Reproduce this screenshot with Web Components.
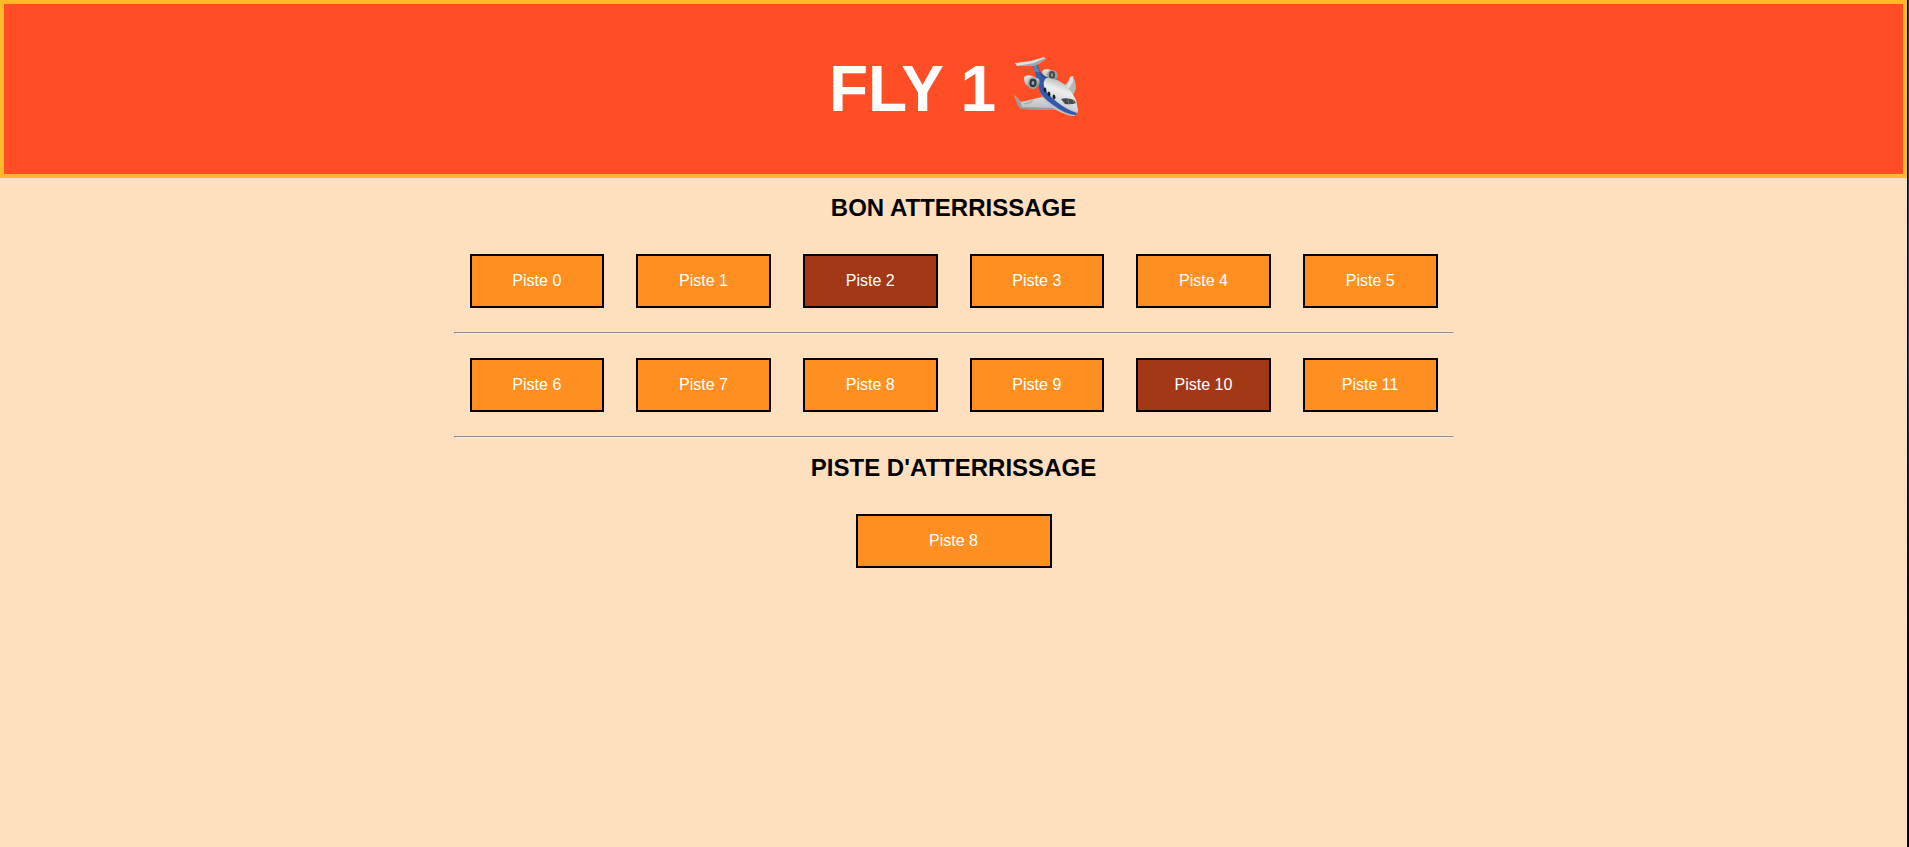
<!DOCTYPE html>
<html lang="fr">
<head>
<meta charset="utf-8">
<meta name="viewport" content="width=device-width, initial-scale=1">
<title>FLY 1</title>
<style>
  html { background: linear-gradient(#1c3a55, #2a4878 40%, #0a1c38 65%, #000 80%); }
  body {
    margin: 0 2px 0 0;
    min-height: 100vh;
    background: #ffe0be;
    box-shadow: 1px 0 #050a10;
    font: 16px/18px "Liberation Sans", Arial, sans-serif;
    color: #000;
  }
</style>
</head>
<body>
<fly-app></fly-app>

<script>
class PlaneIcon extends HTMLElement {
  constructor() {
    super();
    this.attachShadow({ mode: "open" }).innerHTML = `
      <style>
        :host { display: block; width: 64px; height: 64px; }
        svg { display: block; width: 100%; height: 100%; }
      </style>
      <svg viewBox="0 0 64 64" role="img" aria-label="Avion">
        <defs>
          <linearGradient id="body" x1="0.65" y1="0.1" x2="0.35" y2="0.9">
            <stop offset="0" stop-color="#b9bcbc"/><stop offset="0.3" stop-color="#eceeed"/>
            <stop offset="0.7" stop-color="#d3d6d7"/><stop offset="1" stop-color="#9aa1a8"/>
          </linearGradient>
          <linearGradient id="wing" x1="0" y1="0" x2="0" y2="1">
            <stop offset="0" stop-color="#dddfde"/><stop offset="1" stop-color="#b8bbbb"/>
          </linearGradient>
          <linearGradient id="engine" x1="0" y1="0" x2="0.3" y2="1">
            <stop offset="0" stop-color="#ecedeb"/><stop offset="0.6" stop-color="#bdc0be"/><stop offset="1" stop-color="#73797a"/>
          </linearGradient>
        </defs>
        <path d="M48 29Q54 27 56 20L59 19Q62 26 62 31L60 37 54 36Z" fill="#b5b8b7"/>
        <path d="M56 20 59 19 59 25 55 31 51 30Q55 27 56 20Z" fill="#dfe1df"/>
        <path d="M0 38 4 42 7 45 28 40 42 50 41 53 7 52 4 48Z" fill="url(#wing)"/>
        <path d="M0 38 4 42 7 46 8 50 7 52 4 48Z" fill="#999d9c"/>
        <path d="M7 50 40 51 41 53 7 52Z" fill="#959a9a"/>
        <path d="M10 47 19 43 17 46Z" fill="none" stroke="#adb0af"/>
        <path d="M28 15Q29 12 33 12L41 14Q45 18 43 22L39 25 31 22Z" fill="url(#engine)"/>
        <ellipse cx="38" cy="18" rx="5" ry="5" fill="#9c9f9c"/>
        <ellipse cx="38" cy="18" rx="3" ry="4" fill="#42474a"/>
        <ellipse cx="38" cy="18" rx="1" ry="2" fill="#9da09f"/>
        <path d="M17 7 23 5 26 14Q28 18 34 21L29 31 23 27 21 15Z" fill="#3b62a5"/>
        <path d="M17 3 21 3 24 12 26 15 20 15 19 9Z" fill="#6680ac"/>
        <path d="M24 13 27 17 34 21 29 22Z" fill="#274985"/>
        <path d="M1 6 17 4 30 0 32 2 25 6 20 8 3 9Z" fill="#dfe1e0"/>
        <path d="M3 9 20 6 31 1 32 2 25 7 20 9Z" fill="#a3a7a6"/>
        <path d="M28 22Q36 19 47 25Q56 30 62 43L64 53Q64 58 60 58 53 57 44 52Q32 44 27 37Q24 30 28 22Z" fill="url(#body)"/>
        <path d="M26 20 32 21Q28 25 31 32Q34 38 43 45Q53 53 63 56L62 58Q55 58 45 52Q32 44 27 37Q23 30 26 20Z" fill="#315baa"/>
        <path d="M27 37Q33 45 44 52Q54 58 62 58L60 59Q54 59 44 54Q33 49 27 37Z" fill="#bfc4c9"/>
        <path d="M47 42Q53 40 60 43L62 46Q58 48 51 47Z" fill="#454a4e"/>
        <path d="M54 42 55 47M59 43 60 46" stroke="#707578"/>
        <g fill="#171c24">
          <ellipse cx="31" cy="33" rx="1.4" ry="2.4" transform="rotate(-12 31 33)"/>
          <ellipse cx="35" cy="37" rx="1.4" ry="2.4" transform="rotate(-12 35 37)"/>
          <ellipse cx="40" cy="40" rx="1.4" ry="2.4" transform="rotate(-12 40 40)"/>
        </g>
        <path d="M10 20Q13 17 18 19L25 22Q27 27 23 31L17 32Q9 27 10 20Z" fill="url(#engine)"/>
        <ellipse cx="19" cy="26" rx="5" ry="6" fill="#a4a7a4"/>
        <ellipse cx="19" cy="26" rx="3.6" ry="4.3" fill="#33383d"/>
        <ellipse cx="19" cy="26" rx="1.4" ry="2" fill="#8ea3c9"/>
      </svg>`;
  }
}
customElements.define("plane-icon", PlaneIcon);

class FlyHeader extends HTMLElement {
  constructor() {
    super();
    this.attachShadow({ mode: "open" }).innerHTML = `
      <style>
        :host { display: block; border: 4px solid #ffb927; background: #ff4d26; color: #fff; }
        h1 {
          display: flex; justify-content: center; align-items: center; gap: 18px;
          margin: 0; padding: 48px 16px; font-size: 64px; line-height: 74px;
        }
      </style>
      <header><h1><slot></slot><plane-icon></plane-icon></h1></header>`;
  }
}
customElements.define("fly-header", FlyHeader);

class RunwayButton extends HTMLElement {
  constructor() {
    super();
    this.attachShadow({ mode: "open" }).innerHTML = `
      <style>
        :host { display: block; }
        button {
          display: block; width: 100%; padding: 16px; border: 2px solid #000; border-radius: 0;
          background: #ff8f20; color: #fff; font: inherit; text-align: center; cursor: pointer;
        }
        :host([occupied]) button { background: #a33817; }
      </style>
      <button type="button"><slot></slot></button>`;
  }
}
customElements.define("runway-button", RunwayButton);

class RunwayRow extends HTMLElement {
  constructor() {
    super();
    this.attachShadow({ mode: "open" }).innerHTML = `
      <style>
        :host { display: block; }
        div { display: grid; grid-template-columns: repeat(6, 1fr); gap: 32px; padding: 16px; }
        hr { margin: 8px 0; border: 1px solid; border-color: #8e8e8e #ececec #ececec #8e8e8e; }
        :host(:last-of-type) hr { margin-bottom: 0; }
      </style>
      <div><slot></slot></div>
      <hr>`;
  }
}
customElements.define("runway-row", RunwayRow);

class RunwaySection extends HTMLElement {
  constructor() {
    super();
    this.attachShadow({ mode: "open" }).innerHTML = `
      <style>
        :host { display: block; max-width: 1000px; margin: 0 auto; }
        h2 { margin: 0; padding: 16px 0; font-size: 24px; line-height: 28px; text-align: center; }
      </style>
      <section><h2></h2><slot></slot></section>`;
  }
  connectedCallback() {
    this.shadowRoot.querySelector("h2").textContent = this.getAttribute("heading");
  }
}
customElements.define("runway-section", RunwaySection);

class FlyApp extends HTMLElement {
  constructor() {
    super();
    const occupied = new Set([2, 10]);
    const button = n => `<runway-button${occupied.has(n) ? " occupied" : ""}>Piste ${n}</runway-button>`;
    const row = start => `<runway-row>${Array.from({ length: 6 }, (_, i) => button(start + i)).join("")}</runway-row>`;
    this.attachShadow({ mode: "open" }).innerHTML = `
      <style>
        :host { display: block; }
        .assigned { width: 196px; margin: 16px auto; }
      </style>
      <fly-header>FLY 1</fly-header>
      <main>
        <runway-section heading="BON ATTERRISSAGE">${row(0)}${row(6)}</runway-section>
        <runway-section heading="PISTE D'ATTERRISSAGE"><runway-button class="assigned">Piste 8</runway-button></runway-section>
      </main>`;
  }
}
customElements.define("fly-app", FlyApp);
</script>
</body>
</html>
